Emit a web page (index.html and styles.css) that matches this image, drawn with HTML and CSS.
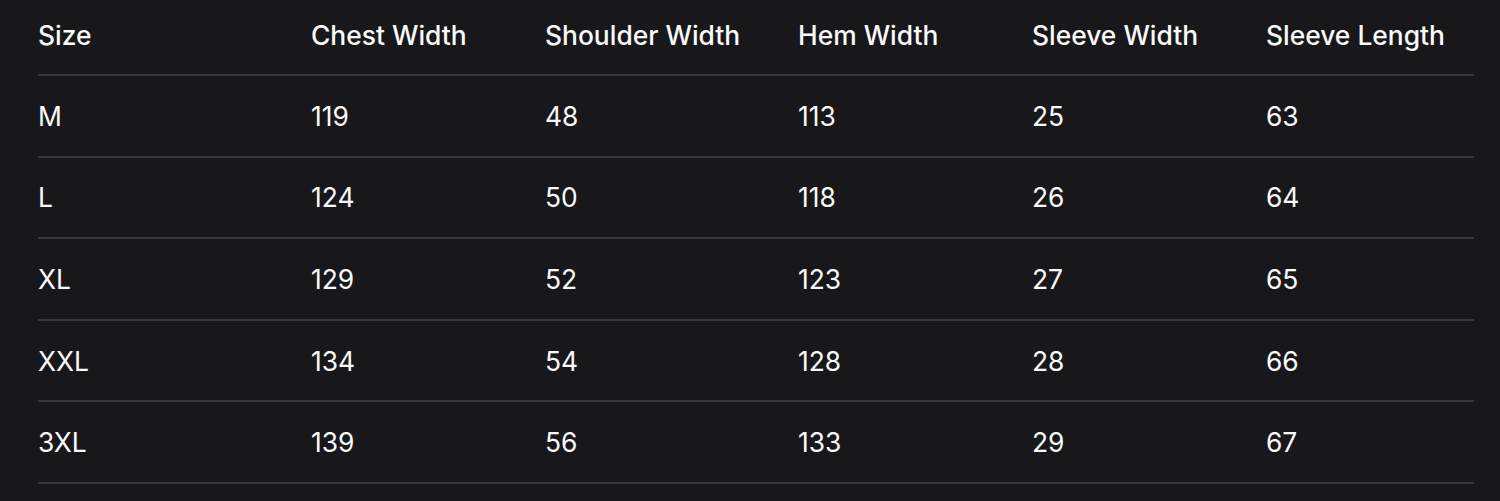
FILE: index.html
```html
<!DOCTYPE html>
<html lang="en">
<head>
<meta charset="utf-8">
<title>Size Chart</title>
<link rel="stylesheet" href="styles.css">
</head>
<body>
<div class="wrap">
<table class="size-table">
<colgroup>
<col class="c1"><col class="c2"><col class="c3"><col class="c4"><col class="c5"><col class="c6">
</colgroup>
<thead>
<tr><th>Size</th><th>Chest Width</th><th>Shoulder Width</th><th>Hem Width</th><th>Sleeve Width</th><th>Sleeve Length</th></tr>
</thead>
<tbody>
<tr><td>M</td><td>119</td><td>48</td><td>113</td><td>25</td><td>63</td></tr>
<tr><td>L</td><td>124</td><td>50</td><td>118</td><td>26</td><td>64</td></tr>
<tr><td>XL</td><td>129</td><td>52</td><td>123</td><td>27</td><td>65</td></tr>
<tr><td>XXL</td><td>134</td><td>54</td><td>128</td><td>28</td><td>66</td></tr>
<tr><td>3XL</td><td>139</td><td>56</td><td>133</td><td>29</td><td>67</td></tr>
</tbody>
</table>
</div>
</body>
</html>
```
FILE: styles.css
```css
html, body {
  margin: 0;
  padding: 0;
  background: #18181a;
}
body {
  font-family: Inter, "Noto Sans", sans-serif;
  color: #fafafa;
}
.wrap {
  padding: 0 26px 0 38px;
}
.size-table {
  width: 100%;
  border-collapse: collapse;
  table-layout: fixed;
}
.c1 { width: 273px; }
.c2 { width: 234px; }
.c3 { width: 253px; }
.c4 { width: 234px; }
.c5 { width: 234px; }
.c6 { width: auto; }
.size-table th,
.size-table td {
  text-align: left;
  padding: 0;
  font-size: 26.4px;
  line-height: 32px;
  border-bottom: 2px solid #38383b;
  white-space: nowrap;
}
.size-table th {
  font-weight: 500;
  height: 75px;
  padding-bottom: 5px;
  box-sizing: border-box;
  vertical-align: middle;
}
.size-table td {
  font-weight: 400;
  height: 79.6px;
  vertical-align: middle;
}
```
